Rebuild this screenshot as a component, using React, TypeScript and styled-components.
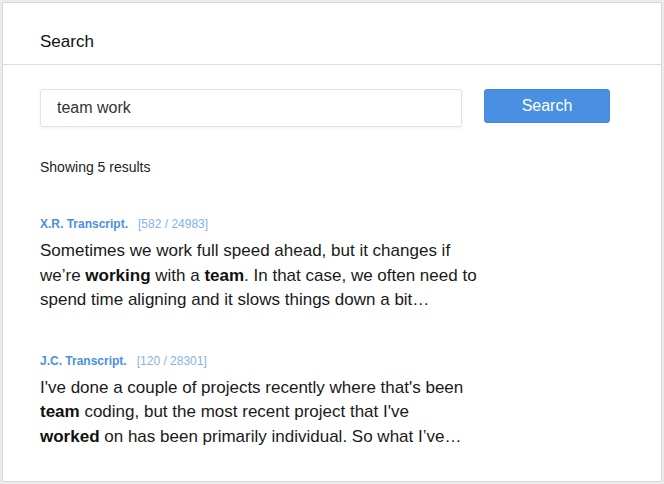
import React from "react";
import styled, { createGlobalStyle } from "styled-components";

const Global = createGlobalStyle`
  html, body { margin: 0; padding: 0; background: #ebebeb; }
  body { font-family: "Liberation Sans", Arial, Helvetica, sans-serif; }
  * { box-sizing: border-box; }
`;

const Page = styled.div`
  padding: 2px;
  width: 664px;
  height: 484px;
`;

const Card = styled.div`
  width: 660px;
  height: 480px;
  background: #ffffff;
  border: 1px solid #d9d9d9;
  display: flex;
  flex-direction: column;
`;

const Header = styled.div`
  height: 62px;
  padding: 28px 37px 0;
  line-height: 22px;
  border-bottom: 1px solid #dcdcdc;
  font-size: 17px;
  color: #111;
`;

const Body = styled.div`
  padding: 24px 37px 0;
  display: flex;
  flex-direction: column;
`;

const SearchRow = styled.div`
  display: flex;
  align-items: flex-start;
  gap: 22px;
`;

const Input = styled.input`
  width: 422px;
  height: 38px;
  border: 1px solid #e2e2e2;
  border-radius: 3px;
  box-shadow: 0 1px 3px rgba(0, 0, 0, 0.06);
  padding: 0 16px;
  font-family: inherit;
  font-size: 16px;
  color: #333;
  outline: none;
`;

const Button = styled.button`
  width: 126px;
  height: 34px;
  border: 1px solid #4689dc;
  border-radius: 3px;
  background: #4a90e2;
  color: #ffffff;
  font-family: inherit;
  font-size: 16px;
  padding: 0 0 1px;
  cursor: pointer;
`;

const Count = styled.div`
  margin-top: 30px;
  font-size: 14px;
  line-height: 20px;
  color: #222;
`;

const Result = styled.div<{ $first?: boolean }>`
  margin-top: ${(p) => (p.$first ? "39px" : "40px")};
`;

const Meta = styled.div`
  font-size: 12px;
  line-height: 16px;
  display: flex;
  gap: 10px;
`;

const Source = styled.span`
  color: #4a90e2;
  font-weight: bold;
`;

const Pos = styled.span`
  color: #85b2ea;
`;

const Excerpt = styled.p`
  margin: 7px 0 0;
  max-width: 445px;
  font-size: 17px;
  line-height: 24.5px;
  color: #1a1a1a;
  b { font-weight: bold; color: #111; }
`;

export default function App() {
  return (
    <>
      <Global />
      <Page>
        <Card>
          <Header>Search</Header>
          <Body>
            <SearchRow>
              <Input defaultValue="team work" />
              <Button>Search</Button>
            </SearchRow>
            <Count>Showing 5 results</Count>
            <Result $first>
              <Meta>
                <Source>X.R. Transcript.</Source>
                <Pos>[582 / 24983]</Pos>
              </Meta>
              <Excerpt>
                Sometimes we work full speed ahead, but it changes if we’re <b>working</b> with a{" "}
                <b>team</b>. In that case, we often need to spend time aligning and it slows things
                down a bit…
              </Excerpt>
            </Result>
            <Result>
              <Meta>
                <Source>J.C. Transcript.</Source>
                <Pos>[120 / 28301]</Pos>
              </Meta>
              <Excerpt>
                I've done a couple of projects recently where that's been <b>team</b> coding, but
                the most recent project that I've
                <br />
                <b>worked</b> on has been primarily individual. So what I’ve…
              </Excerpt>
            </Result>
          </Body>
        </Card>
      </Page>
    </>
  );
}
